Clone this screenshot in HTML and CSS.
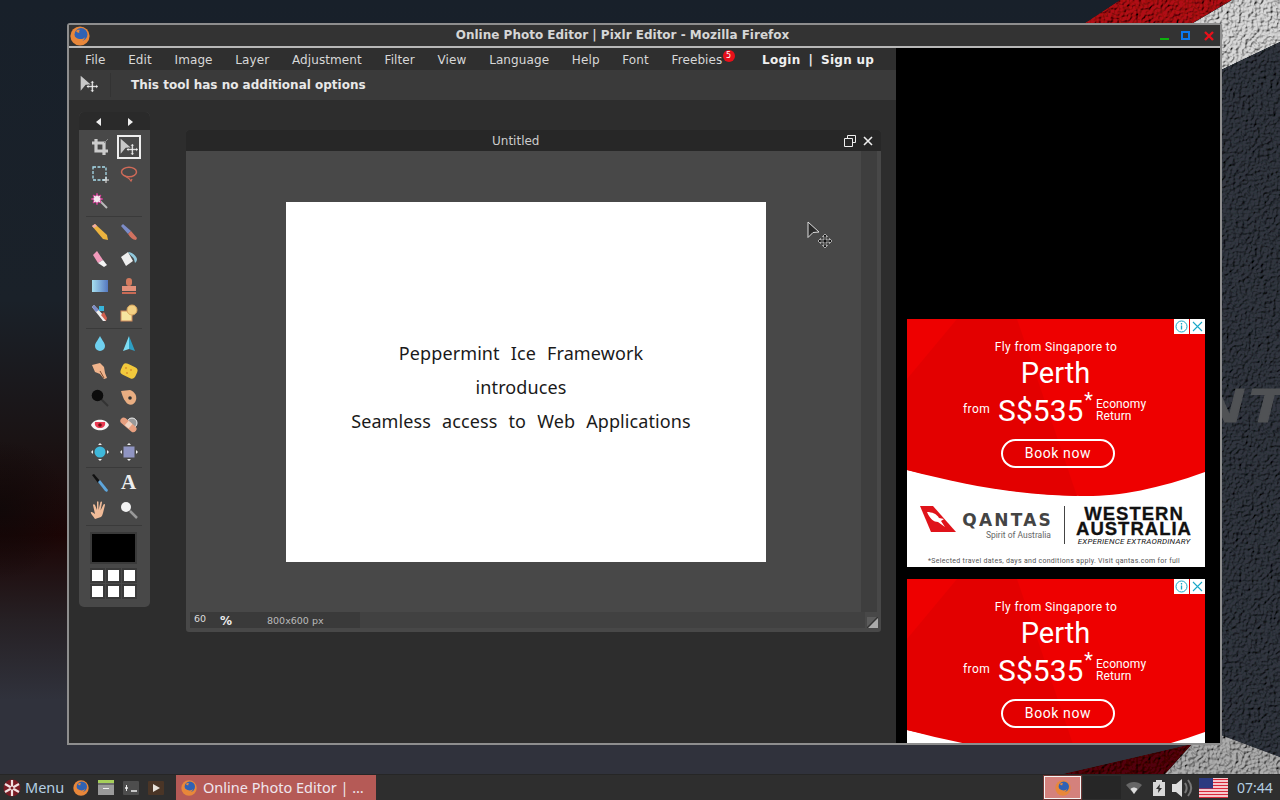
FILE: index.html
```html
<!DOCTYPE html>
<html>
<head>
    <title>Online Photo Editor | Pixlr Editor - Mozilla Firefox</title>
    <link rel="stylesheet" href="styles.css">
</head>
<body>
    <svg class="sprites" width="0" height="0">
        <defs>
            <filter id="leather" x="0" y="0" width="100%" height="100%">
                <feTurbulence type="fractalNoise" baseFrequency="0.32" numOctaves="2" seed="4" result="n"/>
                <feDiffuseLighting in="n" surfaceScale="3.200" diffuseConstant="1.100" lighting-color="#fff" result="l">
                    <feDistantLight azimuth="45" elevation="52"/>
                </feDiffuseLighting>
                <feComposite in="l" in2="SourceGraphic" operator="arithmetic" k1="1.250" k2="0" k3="0" k4="0" result="m"/>
                <feComposite in="m" in2="SourceGraphic" operator="in"/>
            </filter>
            <symbol id="firefox" viewBox="0 0 20 20">
                <circle cx="10" cy="10" r="9.600" fill="#e8873a"/>
                <circle cx="11" cy="8.500" r="6.500" fill="#2f62b5"/>
                <path d="M3 7c1 4 4 6 8 6 2 0 3-.5 4-2-.5 3-3 5-6 5-4 0-7-4-6-9z" fill="#e8873a"/>
                <path d="M6 5c1-1 3-1.500 4-1-1 .8-1 1.500-.5 2.500C8 7 7 6.500 6 5z" fill="#e8873a"/>
            </symbol>
            <symbol id="movetool" viewBox="0 0 24 20">
                <path d="M2 0l12 10.500-6 .5-6 7z" fill="#c8c8c8"/>
                <path d="M16 6l2.500 2.500H17V12h3.500v-1.500L23 13l-2.500 2.500V14H17v3.500h1.500L16 20l-2.500-2.500H15V14h-3.500v1.500L9 13l2.500-2.500V12H15V8.500h-1.500z" fill="#eee" stroke="#333" stroke-width=".4"/>
            </symbol>
            <symbol id="flying-roo" viewBox="0 0 36 26">
                <path d="M0 0h13l23 26H11z" fill="#e0131a"/>
                <path d="M7 6c5 0 10 2 12 6l5 1-3 2 4 6-7-5c-4 0-8-3-11-10z" fill="#fff"/>
            </symbol>
        </defs>
    </svg>

    <div class="desktop">
        <svg class="wallpaper" width="1280" height="774" viewBox="0 0 1280 774">
            <polygon points="1120,0 1232,0 1193,23 1085,23" fill="#a00c10" filter="url(#leather)"/>
            <polygon points="1232,0 1280,0 1280,42 1221,70 1221,23 1193,23" fill="#c4c4c4" filter="url(#leather)"/>
            <polygon points="1221,70 1280,42 1280,757 1221,735" fill="#2b3038" filter="url(#leather)"/>
            <polygon points="1192,744 1221,735 1280,757 1280,774 1165,774" fill="#9c9c9c" filter="url(#leather)"/>
            <polygon points="1192,744 1165,774 1063,774" fill="#4a0406" filter="url(#leather)"/>
        </svg>
        <div class="wall-text">NT</div>

        <div class="window">
            <div class="titlebar">
                <svg class="title-icon"><use href="#firefox"/></svg>
                <span class="title-text">Online Photo Editor | Pixlr Editor - Mozilla Firefox</span>
                <div class="win-buttons">
                    <span class="win-min"></span>
                    <span class="win-max"></span>
                    <svg class="win-close" width="10" height="10" viewBox="0 0 10 10"><path d="M1 1l8 8M9 1l-8 8" stroke="#e8101a" stroke-width="2.400"/></svg>
                </div>
            </div>

            <div class="content">
                <div class="editor">
                    <div class="menubar">
                        <span>File</span>
                        <span>Edit</span>
                        <span>Image</span>
                        <span>Layer</span>
                        <span>Adjustment</span>
                        <span>Filter</span>
                        <span>View</span>
                        <span>Language</span>
                        <span>Help</span>
                        <span>Font</span>
                        <span class="freebies">Freebies<b class="badge">5</b></span>
                        <span class="account"><b>Login</b><b>|</b><b>Sign up</b></span>
                    </div>
                    <div class="optionbar">
                        <div class="option-tool"><svg width="20" height="18"><use href="#movetool"/></svg></div>
                        <b>This tool has no additional options</b>
                    </div>

                    <div class="toolpanel">
                        <div class="panel-head">
                            <span class="arrow-left"></span>
                            <span class="arrow-right"></span>
                        </div>
                        <div class="tools">
                            <div class="tool"><svg width="18" height="18" viewBox="0 0 18 18"><path d="M5 1v12h12M1 5h12v12" fill="none" stroke="#ccc" stroke-width="3.200"/><path d="M13 5l4-4" stroke="#888"/></svg></div>
                            <div class="tool selected"><span class="selected-box"><svg width="22" height="18"><use href="#movetool"/></svg></span></div>
                            <div class="tool"><svg width="18" height="18" viewBox="0 0 18 18"><rect x="2" y="2" width="13" height="13" fill="none" stroke="#a8dcec" stroke-width="1.300" stroke-dasharray="3 1.500"/><path d="M15 12v6M12 15h6" stroke="#eee"/></svg></div>
                            <div class="tool"><svg width="18" height="18" viewBox="0 0 18 18"><ellipse cx="9" cy="7" rx="7.500" ry="4.800" fill="none" stroke="#cf6a58" stroke-width="1.500"/><path d="M5 11c2 1 4 2 6 5l1-2" fill="none" stroke="#cf6a58" stroke-width="1.300"/></svg></div>
                            <div class="tool"><svg width="18" height="18" viewBox="0 0 18 18"><path d="M8 8l8 8" stroke="#bbb" stroke-width="2"/><path d="M6 1l1 3 3-1-1 3 3 1-3 1 1 3-3-1-1 3-1-3-3 1 1-3-3-1 3-1-1-3 3 1z" fill="#f3e8ef" stroke="#d0288c" stroke-width=".7"/></svg></div>
                            <div class="tool"></div>
                            <div class="tool-sep"></div>
                            <div class="tool"><svg width="18" height="18" viewBox="0 0 18 18"><path d="M4 1L1 3l11 13 5 1-1-5z" fill="#edb43f"/><path d="M4 1L1 3l2 2 3-2z" fill="#eaa"/></svg></div>
                            <div class="tool"><svg width="18" height="18" viewBox="0 0 18 18"><path d="M1 3l2-2 8 7-3 3z" fill="#7c8cc8"/><path d="M8 11l3-3 6 7-1 2c-3 0-6-3-8-6z" fill="#d27260"/></svg></div>
                            <div class="tool"><svg width="18" height="18" viewBox="0 0 18 18"><path d="M6 1l6 9-5 3-5-8z" fill="#f29abb"/><path d="M12 10l4 5-3 2-6-4z" fill="#f4f4f4"/></svg></div>
                            <div class="tool"><svg width="18" height="18" viewBox="0 0 18 18"><path d="M8 2l-7 5 5 9 7-5z" fill="#eee"/><path d="M8 2c3 0 8 3 9 7 0 2-1 3-2 4l-1-4c-1-2-4-4-6-7z" fill="#90c8dc"/></svg></div>
                            <div class="tool"><span class="gradient-tool"></span></div>
                            <div class="tool"><svg width="18" height="18" viewBox="0 0 18 18"><rect x="6" y="1" width="6" height="8" rx="3" fill="#d27a5e"/><rect x="2" y="9" width="14" height="5" fill="#e2907a"/><rect x="2" y="15" width="14" height="2" fill="#c96a55"/></svg></div>
                            <div class="tool"><svg width="18" height="18" viewBox="0 0 18 18"><path d="M1 3l2-2 12 13v3h-3z" fill="#eee"/><path d="M1 3l2-2 5 5-3 2z" fill="#7c8cc8"/><path d="M10 11l3-3 3 6-1 3z" fill="#d2604e"/><rect x="8" y="2" width="5" height="5" fill="#38b5da"/></svg></div>
                            <div class="tool"><svg width="18" height="18" viewBox="0 0 18 18"><rect x="1" y="7" width="11" height="10" fill="#f6e6a0" stroke="#d08a5c"/><circle cx="12" cy="6" r="5" fill="#f3d184" stroke="#d9a860"/></svg></div>
                            <div class="tool-sep"></div>
                            <div class="tool"><svg width="18" height="18" viewBox="0 0 18 18"><path d="M9 1c2 4 5 7 5 10a5 5 0 0 1-10 0c0-3 3-6 5-10z" fill="#6fd0ef"/></svg></div>
                            <div class="tool"><svg width="18" height="18" viewBox="0 0 18 18"><path d="M9 1l6 15-6-2z" fill="#2d9fc4"/><path d="M9 1L3 16l6-2z" fill="#7edcf2"/></svg></div>
                            <div class="tool"><svg width="18" height="18" viewBox="0 0 18 18"><path d="M1 3l8-2 4 4 1 6 2 5-3 1-4-5-5-2z" fill="#f0b48c"/><path d="M9 9l4 7" stroke="#7a4a30"/></svg></div>
                            <div class="tool"><svg width="20" height="20" viewBox="0 0 20 20"><rect x="2" y="4" width="16" height="12" rx="4" transform="rotate(25 10 10)" fill="#f2c93c"/><circle cx="7" cy="7" r="1" fill="#d9902c"/><circle cx="12" cy="9" r="1" fill="#d9902c"/><circle cx="8" cy="12" r="1" fill="#d9902c"/></svg></div>
                            <div class="tool"><svg width="18" height="18" viewBox="0 0 18 18"><path d="M10 10l7 7" stroke="#333" stroke-width="2"/><circle cx="6.500" cy="6.500" r="5.800" fill="#0c0c0c"/></svg></div>
                            <div class="tool"><svg width="18" height="18" viewBox="0 0 18 18"><path d="M1 2l9-1c5 2 7 6 6 10-1 4-5 6-8 4-3-2-5-6-7-13z" fill="#e9ae82"/><circle cx="10" cy="9" r="1.800" fill="#333"/></svg></div>
                            <div class="tool"><svg width="20" height="14" viewBox="0 0 20 14"><path d="M1 7c3-7 15-7 18 0-3 7-15 7-18 0z" fill="#f5f5f5"/><path d="M5 4h10c1 4-2 6-5 6s-6-2-5-6z" fill="#e83a52"/><circle cx="10" cy="7" r="1.800" fill="#611"/></svg></div>
                            <div class="tool"><svg width="18" height="18" viewBox="0 0 18 18"><circle cx="12" cy="7" r="5" fill="#999" stroke="#eee"/><rect x="-1" y="6" width="19" height="6.500" rx="3.200" transform="rotate(40 9 9)" fill="#e8a080"/><rect x="6" y="6" width="5" height="6" transform="rotate(40 9 9)" fill="#f3d3c0"/></svg></div>
                            <div class="tool"><svg width="18" height="18" viewBox="0 0 18 18"><circle cx="9" cy="9" r="5.500" fill="#3fb8da"/><path d="M9 0l2 2H7zM9 18l2-2H7zM0 9l2 2V7zM18 9l-2 2V7z" fill="#eee"/></svg></div>
                            <div class="tool"><svg width="18" height="18" viewBox="0 0 18 18"><rect x="3.500" y="3.500" width="11" height="11" fill="#8f94c2"/><path d="M9 0l2 2H7zM9 18l2-2H7zM0 9l2 2V7zM18 9l-2 2V7z" fill="#eee"/></svg></div>
                            <div class="tool-sep"></div>
                            <div class="tool"><svg width="18" height="18" viewBox="0 0 18 18"><path d="M1 1l2-1 6 7-2 2z" fill="#111"/><path d="M7 8l2-2 8 10-1 2-2-1z" fill="#5ea6dc"/></svg></div>
                            <div class="tool"><span class="type-tool">A</span></div>
                            <div class="tool"><svg width="20" height="20" viewBox="0 0 20 20"><path d="M5 19c-2-3-5-6-4-7 1-.5 3 1 4 2L3 5c0-1 1.500-1 2 0l2 5V2c0-1 1.500-1 1.500 0v8l2-8c.5-1 1.500-.5 1.500.5l-1.500 8 3-6c.5-1 1.500-.5 1.500.5l-2 8c-.5 2-1 3-2 4z" fill="#f0bb98"/></svg></div>
                            <div class="tool"><svg width="18" height="18" viewBox="0 0 18 18"><path d="M10 10l7 7" stroke="#999" stroke-width="2.500"/><circle cx="6" cy="6" r="5" fill="#f2f2f2"/></svg></div>
                            <div class="tool-sep"></div>
                        </div>
                        <div class="swatch"><span></span></div>
                        <div class="mini-buttons">
                            <span></span><span></span><span></span>
                            <span></span><span></span><span></span>
                        </div>
                    </div>

                    <div class="docwindow">
                        <div class="doc-title">
                            <span class="doc-name">Untitled</span>
                            <svg class="doc-restore" width="12" height="12" viewBox="0 0 12 12"><path d="M3.500 3V.5h8v7H8.500M.5 3.500h8v8h-8z" fill="none" stroke="#eee"/></svg>
                            <svg class="doc-close" width="10" height="10" viewBox="0 0 10 10"><path d="M1 1l8 8M9 1l-8 8" stroke="#eee" stroke-width="1.600"/></svg>
                        </div>
                        <div class="doc-main">
                            <div class="canvas-area">
                                <div class="canvas-image">
                                    <p>Peppermint Ice Framework</p>
                                    <p>introduces</p>
                                    <p>Seamless access to Web Applications</p>
                                </div>
                            </div>
                            <div class="doc-scroll"></div>
                        </div>
                        <div class="doc-status">
                            <div class="status-info">
                                <span class="zoom-val">60</span>
                                <span class="zoom-pct">%</span>
                                <span class="doc-size">800x600 px</span>
                            </div>
                            <svg class="doc-resize" width="11" height="11" viewBox="0 0 11 11"><rect width="11" height="11" fill="#5c5c5c"/><path d="M11 0v11H0z" fill="#aaa"/><path d="M0 11L11 0" stroke="#333" stroke-width="1.500"/></svg>
                        </div>
                    </div>

                    <svg class="cursor-arrow" width="14" height="18" viewBox="0 0 14 18"><path d="M1 1l11 10-6 .5-5 5z" fill="#2a2a2a" stroke="#ddd"/></svg>
                    <svg class="cursor-move" width="14" height="14" viewBox="0 0 14 14"><path d="M7 0l2.500 2.500H8V6h3.500V4.500L14 7l-2.500 2.500V8H8v3.500h1.500L7 14l-2.500-2.500H6V8H2.500v1.500L0 7l2.500-2.500V6H6V2.500H4.500z" fill="#111" stroke="#ddd" stroke-width=".7"/></svg>
                </div>

                <div class="adpane">
                    <div class="ad">
                        <svg class="ad-shape" width="298" height="248" viewBox="0 0 298 248"><path d="M0 0h298v153c-50 18-90 25-125 24C110 176 60 164 0 151z" fill="#ee0000"/><path d="M50 0h60l60 177c-50 0-110-10-170-26V60z" fill="#e30000"/></svg>
                        <div class="ad-marks">
                            <svg width="15" height="15" viewBox="0 0 15 15"><rect width="15" height="15" fill="#fff"/><circle cx="7.500" cy="7.500" r="5.500" fill="none" stroke="#19a8c8"/><path d="M7.500 6.500v4M7.500 4v1.400" stroke="#19a8c8" stroke-width="1.300"/></svg>
                            <svg width="15" height="15" viewBox="0 0 15 15"><rect width="15" height="15" fill="#fff"/><path d="M3 3l9 9M12 3l-9 9" stroke="#19a8c8" stroke-width="1.100"/></svg>
                        </div>
                        <div class="ad-from">Fly from Singapore to</div>
                        <div class="ad-city">Perth</div>
                        <div class="ad-price">
                            <span class="ad-pre">from</span>
                            <span class="ad-amount">S$535</span>
                            <span class="ad-star">*</span>
                            <span class="ad-class">Economy<br>Return</span>
                        </div>
                        <div class="ad-book">Book now</div>
                        <div class="ad-logos">
                            <svg class="roo" width="36" height="26"><use href="#flying-roo"/></svg>
                            <div class="qantas">
                                <div class="qantas-name">QANTAS</div>
                                <div class="qantas-sub">Spirit of Australia</div>
                            </div>
                            <div class="ad-divider"></div>
                            <div class="wa">
                                <div class="wa-name">WESTERN<br>AUSTRALIA</div>
                                <div class="wa-sub">EXPERIENCE EXTRAORDINARY</div>
                            </div>
                        </div>
                        <div class="ad-note">*Selected travel dates, days and conditions apply. Visit qantas.com for full</div>
                    </div>
                    <div class="ad">
                        <svg class="ad-shape" width="298" height="248" viewBox="0 0 298 248"><path d="M0 0h298v153c-50 18-90 25-125 24C110 176 60 164 0 151z" fill="#ee0000"/><path d="M50 0h60l60 177c-50 0-110-10-170-26V60z" fill="#e30000"/></svg>
                        <div class="ad-marks">
                            <svg width="15" height="15" viewBox="0 0 15 15"><rect width="15" height="15" fill="#fff"/><circle cx="7.500" cy="7.500" r="5.500" fill="none" stroke="#19a8c8"/><path d="M7.500 6.500v4M7.500 4v1.400" stroke="#19a8c8" stroke-width="1.300"/></svg>
                            <svg width="15" height="15" viewBox="0 0 15 15"><rect width="15" height="15" fill="#fff"/><path d="M3 3l9 9M12 3l-9 9" stroke="#19a8c8" stroke-width="1.100"/></svg>
                        </div>
                        <div class="ad-from">Fly from Singapore to</div>
                        <div class="ad-city">Perth</div>
                        <div class="ad-price">
                            <span class="ad-pre">from</span>
                            <span class="ad-amount">S$535</span>
                            <span class="ad-star">*</span>
                            <span class="ad-class">Economy<br>Return</span>
                        </div>
                        <div class="ad-book">Book now</div>
                    </div>
                </div>
            </div>
        </div>
    </div>

    <div class="taskbar">
        <div class="start">
            <svg width="18" height="18" viewBox="0 0 18 18"><circle cx="9" cy="9" r="8.500" fill="#7a1c24"/><path d="M9 9V1M9 9l7-4M9 9l7 4M9 9v8M9 9l-7 4M9 9L2 5" stroke="#f2e2e2" stroke-width="2.200"/><circle cx="9" cy="9" r="1.500" fill="#7a1c24"/></svg>
            <span>Menu</span>
        </div>
        <div class="launchers">
            <svg width="16" height="16"><use href="#firefox"/></svg>
            <svg width="16" height="15" viewBox="0 0 16 15"><rect width="16" height="15" fill="#9a9a9a"/><rect width="16" height="3" fill="#a6cf5a"/><rect y="3" width="16" height="2" fill="#6c6c6c"/><rect x="5" y="8" width="6" height="1" fill="#eee"/></svg>
            <svg width="16" height="14" viewBox="0 0 16 14"><rect width="16" height="14" rx="1" fill="#4d4d4d"/><path d="M2 7h3M8 10h6" stroke="#eee" stroke-width="1.500"/><path d="M3.500 4v6" stroke="#eee"/></svg>
            <svg width="16" height="14" viewBox="0 0 16 14"><rect width="16" height="14" rx="1" fill="#4a3526"/><path d="M5 3l7 4-7 4z" fill="#e8e2da"/></svg>
        </div>
        <div class="task-button">
            <svg width="16" height="16"><use href="#firefox"/></svg>
            <span>Online Photo Editor | …</span>
        </div>
        <div class="pager">
            <div class="pager-active"><svg width="16" height="16"><use href="#firefox"/></svg></div>
            <div class="pager-idle"></div>
        </div>
        <div class="tray">
            <svg class="tray-wifi" width="16" height="12" viewBox="0 0 16 12"><path d="M0 3c4-4 12-4 16 0l-8 9z" fill="#666"/><path d="M4.500 7c2-2 5-2 7 0L8 12z" fill="#ddd"/></svg>
            <svg class="tray-power" width="12" height="16" viewBox="0 0 12 16"><path d="M3 0h6v2h3v14H0V2h3z" fill="#d8d8d8"/><path d="M7 4L3 9h2.500L5 13l4-5H6.500z" fill="#333"/></svg>
            <svg class="tray-sound" width="22" height="20" viewBox="0 0 22 20"><path d="M0 6h4l6-5v18l-6-5H0z" fill="#ddd"/><path d="M13 5c2 3 2 7 0 10M16 2c4 5 4 11 0 16" fill="none" stroke="#777" stroke-width="2"/></svg>
            <svg class="tray-flag" width="29" height="20" viewBox="0 0 29 20"><rect width="29" height="20" fill="#fff"/><path d="M0 1.500h29M0 4.500h29M0 7.500h29M0 10.500h29M0 13.500h29M0 16.500h29M0 19.500h29" stroke="#d8273a" stroke-width="1.500"/><rect width="14" height="10.500" fill="#2c3a80"/></svg>
            <span class="clock">07:44</span>
        </div>
    </div>
</body>
</html>
```
FILE: styles.css
```css
* {
    box-sizing: border-box;
}
body {
    margin: 0;
    width: 1280px;
    height: 800px;
    overflow: hidden;
    font-family: "DejaVu Sans", sans-serif;
    background-color: #1a2027;
    display: flex;
    flex-direction: column;
}
.sprites {
    position: absolute;
}
.desktop {
    position: relative;
    height: 774px;
    flex-shrink: 0;
    overflow: hidden;
    background:
        radial-gradient(ellipse 70px 70px at 0px 510px, rgba(14, 8, 8, .8) 0%, rgba(14, 8, 8, 0) 100%),
        linear-gradient(180deg, #18202a 0px, #1a2129 300px, #1a1314 440px, #1c0505 535px, #262024 620px, #30323c 700px, #30323c 774px);
}
.wallpaper {
    position: absolute;
    left: 0;
    top: 0;
}
.wall-text {
    position: absolute;
    left: 1198px;
    top: 378px;
    font-family: "Liberation Sans", sans-serif;
    font-weight: bold;
    font-style: italic;
    font-size: 48px;
    letter-spacing: 3px;
    color: #505255;
    -webkit-text-stroke: 1px #505255;
    transform: scaleX(1.300);
    transform-origin: left top;
    white-space: nowrap;
}

/* browser window */
.window {
    position: absolute;
    left: 67px;
    top: 23px;
    width: 1155px;
    height: 722px;
    border: 2px solid #8e8e8e;
    border-radius: 3px 3px 0 0;
    background-color: #2d2d2d;
    display: flex;
    flex-direction: column;
}
.titlebar {
    height: 23px;
    flex-shrink: 0;
    background-color: #333;
    border-bottom: 2px solid #b8b8b8;
    display: flex;
    align-items: center;
    position: relative;
}
.title-icon {
    width: 20px;
    height: 20px;
    margin-left: 1px;
}
.title-text {
    position: absolute;
    left: 0;
    right: 0;
    top: 2px;
    padding-right: 44px;
    text-align: center;
    font-size: 12px;
    line-height: 16px;
    font-weight: bold;
    color: #d6d6d6;
    white-space: nowrap;
}
.win-buttons {
    margin-left: auto;
    display: flex;
    align-items: center;
    gap: 12px;
    padding-right: 6px;
}
.win-min {
    width: 9px;
    height: 2px;
    background-color: #0db00d;
    margin-top: 7px;
}
.win-max {
    width: 9px;
    height: 9px;
    border: 2px solid #0a78f0;
}
.win-close {
    display: block;
    margin-left: 2px;
}
.content {
    flex: 1;
    display: flex;
    min-height: 0;
}
.editor {
    position: relative;
    width: 827px;
    background-color: #2d2d2d;
    display: flex;
    flex-direction: column;
}
.menubar {
    height: 22px;
    background-color: #2f2f2f;
    padding: 2px 0 0 16px;
    display: flex;
    align-items: center;
    gap: 22.700px;
    font-size: 12px;
    letter-spacing: .1px;
    color: #d8d8d8;
    white-space: nowrap;
}
.freebies {
    position: relative;
}
.badge {
    position: absolute;
    left: 51px;
    top: -3px;
    width: 12px;
    height: 12px;
    border-radius: 50%;
    background-color: #e8101a;
    color: #fff;
    font-size: 8px;
    font-weight: normal;
    line-height: 12px;
    text-align: center;
}
.account {
    margin-left: 17px;
    display: flex;
    gap: 8px;
    letter-spacing: .25px;
    color: #f0f0f0;
}
.optionbar {
    height: 30px;
    background-color: #3a3a3a;
    display: flex;
    align-items: center;
    font-size: 12px;
    color: #e8e8e8;
}
.optionbar b {
    margin-top: -1px;
}
.option-tool {
    width: 42px;
    height: 24px;
    margin-right: 20px;
    padding: 2px 0 0 10px;
    border-right: 1px solid #333;
}

/* tool panel */
.toolpanel {
    position: absolute;
    left: 10px;
    top: 64px;
    width: 71px;
    height: 495px;
    background-color: #484848;
    border-radius: 5px;
    overflow: hidden;
}
.panel-head {
    height: 18px;
    padding-top: 2px;
    background-color: #2a2a2a;
    display: flex;
    justify-content: center;
    align-items: center;
    gap: 27px;
}
.arrow-left {
    border-right: 5px solid #eee;
    border-top: 4px solid transparent;
    border-bottom: 4px solid transparent;
}
.arrow-right {
    border-left: 5px solid #eee;
    border-top: 4px solid transparent;
    border-bottom: 4px solid transparent;
}
.tools {
    display: grid;
    grid-template-columns: 29px 29px;
    grid-template-rows: repeat(3, 27px) 4px repeat(4, 27px) 4px repeat(5, 27px) 4px repeat(2, 27px) 4px;
    padding: 3px 0 0 6px;
}
.tool {
    display: flex;
    align-items: center;
    justify-content: center;
}
.selected-box {
    display: flex;
    align-items: center;
    justify-content: center;
    width: 24px;
    height: 24px;
    border: 2px solid #eee;
}
.tool-sep {
    grid-column: 1 / 3;
    height: 1px;
    margin: 2px 1px 0 1px;
    background-color: #3a3a3a;
    align-self: start;
}
.gradient-tool {
    width: 16px;
    height: 12px;
    background: linear-gradient(90deg, #a6e0f0, #5578c0);
}
.type-tool {
    font-family: "Liberation Serif", serif;
    font-weight: bold;
    font-size: 21px;
    color: #eee;
}
.swatch {
    width: 47px;
    height: 32px;
    margin: 5px 0 0 11px;
    padding: 2px;
    background-color: #3a3a3a;
}
.swatch span {
    display: block;
    height: 100%;
    background-color: #000;
}
.mini-buttons {
    display: grid;
    grid-template-columns: repeat(3, 11px);
    grid-auto-rows: 11px;
    gap: 5px;
    margin: 6px 0 0 13px;
}
.mini-buttons span {
    background-color: #fff;
    outline: 2px solid #3a3a3a;
}

/* document window */
.docwindow {
    position: absolute;
    left: 117px;
    top: 82px;
    width: 695px;
    height: 502px;
    background-color: #484848;
    border-radius: 3px;
    display: flex;
    flex-direction: column;
}
.doc-title {
    height: 21px;
    background-color: #272727;
    border-radius: 3px 3px 0 0;
    position: relative;
    display: flex;
    align-items: center;
    justify-content: flex-end;
    gap: 7px;
    padding-right: 8px;
}
.doc-name {
    position: absolute;
    left: 306px;
    top: 4px;
    font-size: 12px;
    color: #ccc;
}
.doc-main {
    height: 461px;
    display: flex;
}
.canvas-area {
    width: 675px;
    padding: 51px 0 0 100px;
}
.canvas-image {
    width: 480px;
    height: 360px;
    background-color: #fff;
    padding: 134px 10px 0 0;
    text-align: center;
    font-family: "Noto Sans", sans-serif;
    font-size: 18px;
    letter-spacing: .1px;
    word-spacing: 6.300px;
    color: #1a1a1a;
}
.canvas-image p {
    margin: 0;
    line-height: 34px;
}
.doc-scroll {
    width: 16px;
    background-color: #3e3e3e;
}
.doc-status {
    flex: 1;
    padding: 0 3px 4px 4px;
    position: relative;
}
.status-info {
    height: 16px;
    width: 170px;
    background-color: #3a3a3a;
    position: relative;
    font-size: 9.500px;
    color: #bbb;
    line-height: 16px;
}
.status-info::after {
    content: "";
    position: absolute;
    left: 170px;
    top: 0;
    width: 505px;
    height: 16px;
    background-color: #414141;
}
.zoom-val {
    position: absolute;
    left: 4px;
    top: -1px;
    color: #ddd;
}
.zoom-pct {
    position: absolute;
    left: 30px;
    top: 1px;
    font-size: 12px;
    font-weight: bold;
    color: #eee;
}
.doc-size {
    position: absolute;
    left: 77px;
    top: 1px;
}
.doc-resize {
    position: absolute;
    right: 3px;
    top: 5px;
}
.cursor-arrow {
    position: absolute;
    left: 738px;
    top: 173px;
}
.cursor-move {
    position: absolute;
    left: 749px;
    top: 186px;
}

/* ads */
.adpane {
    flex: 1;
    background-color: #000;
    padding: 271px 0 0 11px;
    overflow: hidden;
    display: flex;
    flex-direction: column;
    gap: 12px;
}
.ad {
    position: relative;
    flex-shrink: 0;
    width: 298px;
    height: 248px;
    background-color: #fff;
    font-family: Roboto, sans-serif;
    color: #fff;
    text-align: center;
    overflow: hidden;
}
.ad-shape {
    position: absolute;
    left: 0;
    top: 0;
}
.ad-marks {
    position: absolute;
    right: 0;
    top: 0;
    display: flex;
    gap: 1px;
    height: 15px;
}
.ad-from,
.ad-city,
.ad-price,
.ad-book,
.ad-logos,
.ad-note {
    position: relative;
}
.ad-from {
    padding: 21px 0 0 0;
    font-size: 12px;
    line-height: 14px;
    letter-spacing: .4px;
}
.ad-city {
    font-size: 29px;
    line-height: 34px;
    margin-top: 2px;
    padding-right: 1px;
}
.ad-price {
    display: flex;
    align-items: flex-start;
    height: 36px;
    padding-left: 56px;
    margin-top: 3px;
    text-align: left;
}
.ad-pre {
    font-size: 12px;
    margin-top: 9px;
    margin-right: 8px;
    letter-spacing: .4px;
}
.ad-amount {
    font-size: 30px;
    line-height: 36px;
}
.ad-star {
    font-size: 20px;
    line-height: 20px;
    margin: -3px 3px 0 1px;
}
.ad-class {
    font-size: 12px;
    line-height: 11.500px;
    margin-top: 6px;
    letter-spacing: .1px;
}
.ad-book {
    width: 114px;
    height: 29px;
    margin: 10px 0 0 94px;
    border: 2px solid #fff;
    border-radius: 15px;
    font-size: 14px;
    line-height: 25px;
    letter-spacing: .6px;
}
.ad-logos {
    display: flex;
    align-items: flex-start;
    margin-top: 38px;
    padding-left: 13px;
    color: #333;
    text-align: left;
}
.roo {
    flex-shrink: 0;
    margin-right: -1px;
}
.qantas {
    width: 96px;
    padding-top: 7px;
    text-align: right;
}
.qantas-name {
    font-family: "DejaVu Sans", sans-serif;
    font-weight: bold;
    font-size: 17px;
    line-height: 15px;
    color: #444;
    letter-spacing: 2.200px;
    margin-right: -2px;
}
.qantas-sub {
    font-size: 8.500px;
    line-height: 11px;
    margin-top: 2px;
    color: #666;
}
.ad-divider {
    width: 1px;
    height: 38px;
    flex-shrink: 0;
    margin: 0 10px 0 13px;
    background-color: #444;
}
.wa {
    width: 118px;
    color: #111;
    text-align: center;
}
.wa-name {
    font-family: "Liberation Sans", sans-serif;
    font-weight: bold;
    font-size: 18.500px;
    line-height: 15px;
    letter-spacing: 1px;
    -webkit-text-stroke: .3px #111;
    white-space: nowrap;
}
.wa-sub {
    font-size: 8px;
    line-height: 10px;
    margin-top: 1px;
    font-style: italic;
    letter-spacing: .2px;
    white-space: nowrap;
}
.ad-note {
    margin-top: 10px;
    padding-right: 4px;
    font-size: 7px;
    line-height: 9px;
    color: #555;
    letter-spacing: .3px;
    white-space: nowrap;
}

/* taskbar */
.taskbar {
    height: 26px;
    flex-shrink: 0;
    background-color: #2e2e2e;
    border-top: 1px solid #262626;
    display: flex;
    align-items: center;
    font-family: "Noto Sans", sans-serif;
    font-size: 14.500px;
    color: #b4cfe2;
    padding-left: 3px;
}
.start {
    display: flex;
    align-items: center;
    gap: 4px;
    width: 70px;
    flex-shrink: 0;
}
.start span,
.task-button span {
    margin-top: -2px;
}
.launchers {
    display: flex;
    align-items: center;
    gap: 9px;
    width: 103px;
    flex-shrink: 0;
}
.task-button {
    width: 200px;
    height: 25px;
    flex-shrink: 0;
    background-color: #b55a56;
    display: flex;
    align-items: center;
    gap: 6px;
    padding-left: 5px;
    color: #efe6ee;
    white-space: nowrap;
}
.pager {
    margin-left: 668px;
    display: flex;
    gap: 2px;
    height: 23px;
    flex-shrink: 0;
}
.pager-active {
    width: 37px;
    background-color: #d4817c;
    border: 1px solid #f4f4f4;
    outline: 1px solid #6e3634;
    display: flex;
    align-items: center;
    justify-content: center;
}
.pager-idle {
    width: 38px;
    background-color: #262626;
}
.tray {
    margin-left: 5px;
    display: flex;
    align-items: center;
    flex-shrink: 0;
}
.tray-power {
    margin-left: 11px;
}
.tray-sound {
    margin-left: 7px;
}
.tray-flag {
    margin-left: 5px;
}
.clock {
    font-size: 14px;
    margin-left: 9px;
}
```
